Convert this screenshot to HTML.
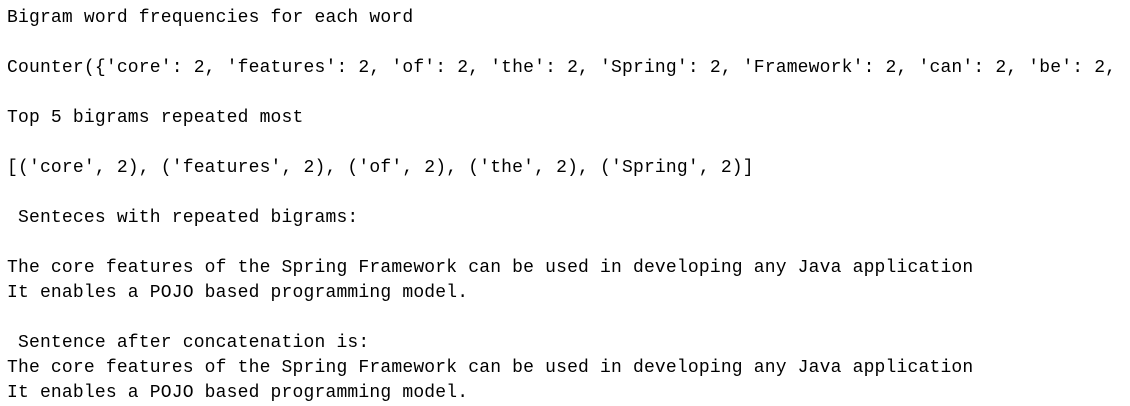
<!DOCTYPE html>
<html><head><meta charset="utf-8"><style>
html,body{margin:0;padding:0;background:#fff;width:1130px;height:406px;overflow:hidden}
pre{margin:0;padding:5.5px 0 0 7px;font-family:"Liberation Mono","DejaVu Sans Mono",monospace;font-size:18px;letter-spacing:0.18px;line-height:25px;color:#000;white-space:pre}
</style></head><body><pre>Bigram word frequencies for each word

Counter({'core': 2, 'features': 2, 'of': 2, 'the': 2, 'Spring': 2, 'Framework': 2, 'can': 2, 'be': 2,

Top 5 bigrams repeated most

[('core', 2), ('features', 2), ('of', 2), ('the', 2), ('Spring', 2)]

 Senteces with repeated bigrams:

The core features of the Spring Framework can be used in developing any Java application
It enables a POJO based programming model.

 Sentence after concatenation is:
The core features of the Spring Framework can be used in developing any Java application
It enables a POJO based programming model.</pre></body></html>
